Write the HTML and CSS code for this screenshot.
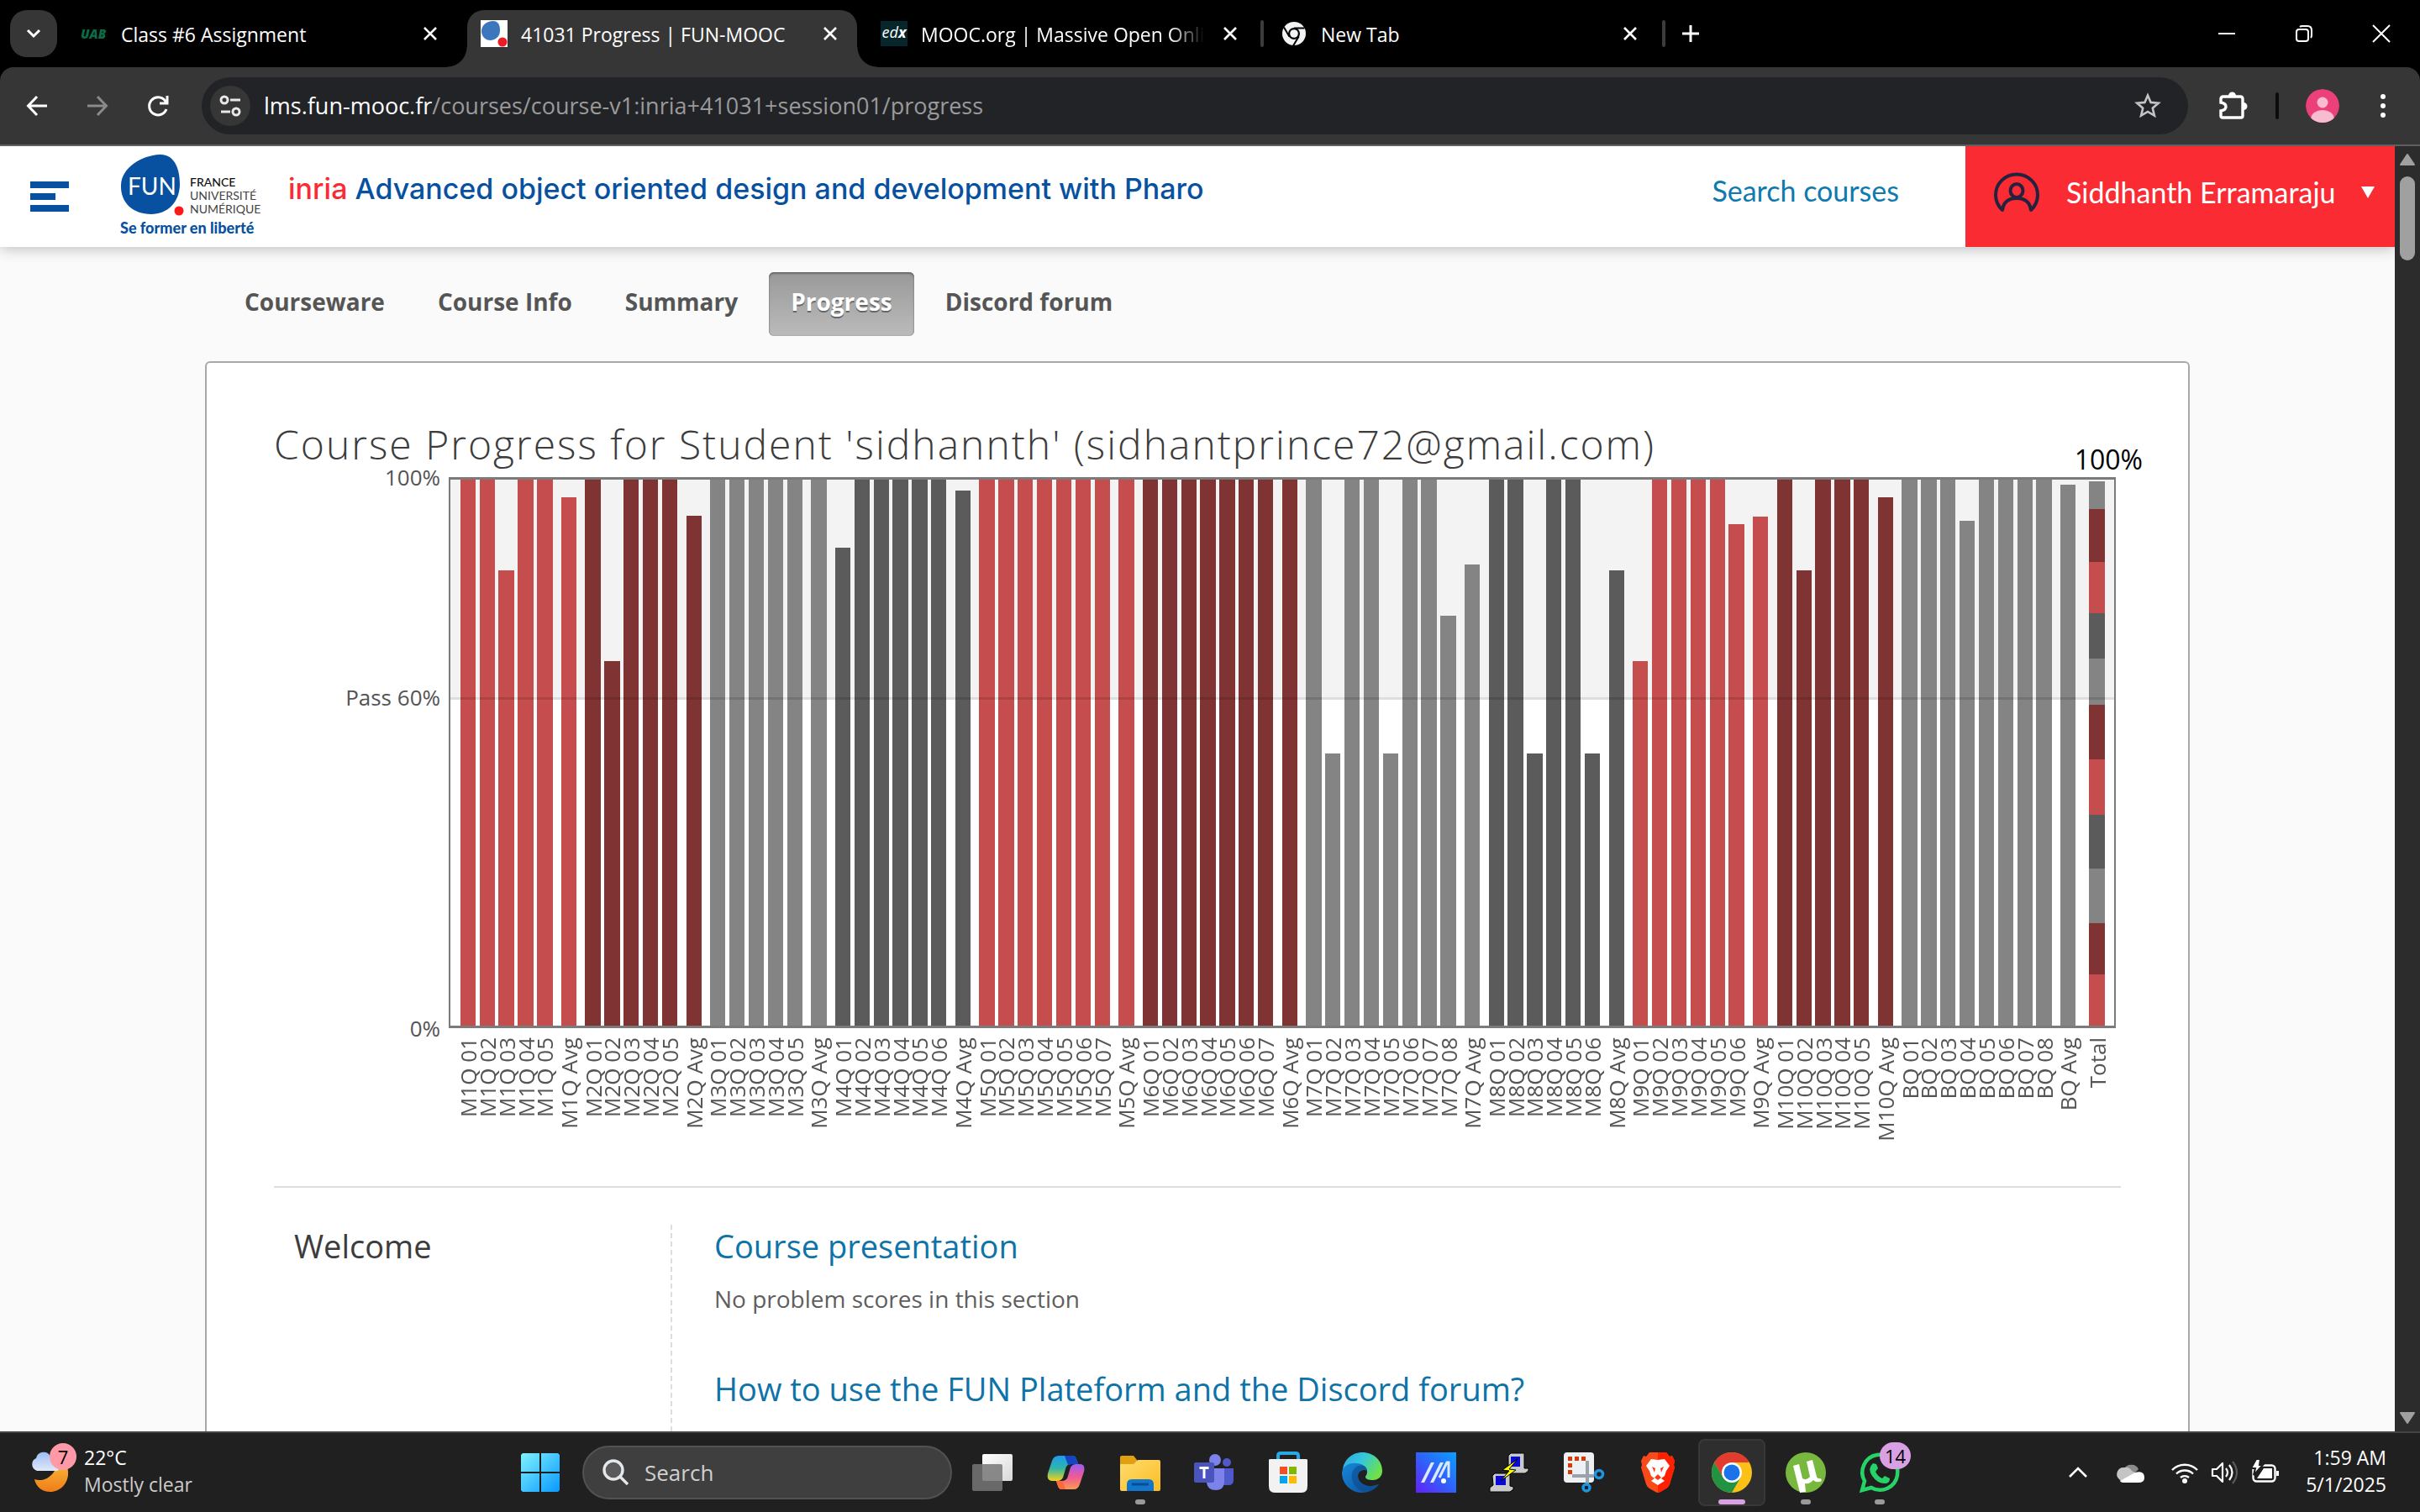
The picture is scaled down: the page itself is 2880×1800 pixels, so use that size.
FILE: index.html
```html
<!DOCTYPE html>
<html lang="en">
<head>
<meta charset="utf-8">
<title>41031 Progress | FUN-MOOC</title>
<link rel="stylesheet" href="styles.css">
</head>
<body>
<header class="browser">
  <div class="tabstrip">
    <button class="tab-search" aria-label="Search tabs"><svg width="20" height="12" viewBox="0 0 20 12"><path d="M3 2l7 7 7-7" fill="none" stroke="#fff" stroke-width="3"/></svg></button>
    <div class="tab">
      <span class="favicon uab">UAB</span>
      <span class="tab-title">Class #6 Assignment</span>
      <button class="icon-btn" aria-label="Close tab"><svg width="16" height="16" viewBox="0 0 16 16"><path d="M1 1l14 14M15 1L1 15" stroke="#fff" stroke-width="2.6"/></svg></button>
    </div>
    <div class="tab active">
      <span class="favicon"><svg width="32" height="32" viewBox="0 0 32 32"><rect width="32" height="32" fill="#fff"/><path d="M15 1C21 1 23 6 23 12c0 7-4 11-11 12C5 24 1 19 1 13 1 6 7 1 15 1z" fill="#3c76bd"/><circle cx="26" cy="26" r="5.5" fill="#ed1c24"/></svg></span>
      <span class="tab-title">41031 Progress | FUN-MOOC</span>
      <button class="icon-btn" aria-label="Close tab"><svg width="16" height="16" viewBox="0 0 16 16"><path d="M1 1l14 14M15 1L1 15" stroke="#fff" stroke-width="2.6"/></svg></button>
    </div>
    <div class="tab">
      <span class="favicon edx">ed<b>x</b></span>
      <span class="tab-title fade">MOOC.org | Massive Open Online Courses</span>
      <button class="icon-btn" aria-label="Close tab"><svg width="16" height="16" viewBox="0 0 16 16"><path d="M1 1l14 14M15 1L1 15" stroke="#fff" stroke-width="2.6"/></svg></button>
    </div>
    <div class="tab split">
      <span class="favicon"><svg width="32" height="32" viewBox="0 0 32 32"><circle cx="16" cy="16" r="14" fill="#f1f3f4"/><g stroke="#000" stroke-width="2" fill="none"><path d="M16 9.500h12.500M10.400 19.500L4 8.500M21.600 19.500L15 30.500"/></g><circle cx="16" cy="16" r="7" fill="#000"/><circle cx="16" cy="16" r="4.800" fill="#f1f3f4"/></svg></span>
      <span class="tab-title">New Tab</span>
      <button class="icon-btn" aria-label="Close tab"><svg width="16" height="16" viewBox="0 0 16 16"><path d="M1 1l14 14M15 1L1 15" stroke="#fff" stroke-width="2.6"/></svg></button>
    </div>
    <button class="new-tab" aria-label="New tab"><svg width="20" height="20" viewBox="0 0 20 20"><path d="M10 0v20M0 10h20" stroke="#fff" stroke-width="3"/></svg></button>
    <div class="window-controls">
      <button aria-label="Minimize"><svg width="20" height="20" viewBox="0 0 20 20"><path d="M0 10h20" stroke="#fff" stroke-width="2"/></svg></button>
      <button aria-label="Restore"><svg width="20" height="20" viewBox="0 0 20 20" fill="none" stroke="#fff" stroke-width="2"><rect x="1" y="5" width="14" height="14" rx="3"/><path d="M5 2q1-1 3-1h6q5 0 5 5v6q0 2-1 3"/></svg></button>
      <button aria-label="Close"><svg width="20" height="20" viewBox="0 0 20 20"><path d="M0 0l20 20M20 0L0 20" stroke="#fff" stroke-width="2"/></svg></button>
    </div>
  </div>
  <div class="toolbar">
    <div class="nav-buttons">
      <button aria-label="Back"><svg width="24" height="24" viewBox="0 0 24 24" fill="none" stroke="#fff" stroke-width="3"><path d="M24 12H2M12 1L1.500 12 12 23"/></svg></button>
      <button aria-label="Forward"><svg width="24" height="24" viewBox="0 0 24 24" fill="none" stroke="#8a8a8a" stroke-width="3"><path d="M0 12h22M12 1l10.500 11L12 23"/></svg></button>
      <button aria-label="Reload"><svg width="24" height="24" viewBox="0 0 24 24" fill="none" stroke="#fff" stroke-width="3"><path d="M22 16A10.500 10.500 0 1 1 20.500 6L22 8.500M23 0v9h-9"/></svg></button>
    </div>
    <div class="omnibox">
      <button class="site-info" aria-label="Site information"><svg width="26" height="26" viewBox="0 0 26 26" fill="none" stroke="#e8e8e8" stroke-width="3"><circle cx="6" cy="6" r="4"/><path d="M13 6h12M2 20h11"/><circle cx="20" cy="20" r="4"/></svg></button>
      <div class="url" role="textbox" aria-label="Address"><span class="host">lms.fun-mooc.fr</span>/courses/course-v1:inria+41031+session01/progress</div>
      <button class="star" aria-label="Bookmark this tab"><svg width="32" height="32" viewBox="0 0 32 32"><path d="M16 3.500l3.600 8.400 9.100.8-6.900 6 2.100 8.900-7.900-4.700-7.900 4.700 2.100-8.900-6.900-6 9.100-.8z" fill="none" stroke="#c4c4c4" stroke-width="2.600"/></svg></button>
    </div>
    <div class="toolbar-end">
      <button aria-label="Extensions"><svg width="36" height="36" viewBox="0 0 36 36"><path d="M3 10q0-3 3-3h20q3 0 3 3v20q0 2-2 2H5q-2 0-2-2v-6q6-1 6-5t-6-5z" fill="none" stroke="#fff" stroke-width="3.400"/><path d="M12 6a4.500 4.500 0 0 1 9 0zM30 14a4.500 4.500 0 0 1 0 9z" fill="#fff"/></svg></button>
      <span class="toolbar-rule"></span>
      <button aria-label="Profile"><svg width="40" height="40" viewBox="0 0 40 40"><clipPath id="av"><circle cx="20" cy="20" r="20"/></clipPath><g clip-path="url(#av)"><circle cx="20" cy="20" r="20" fill="#ec407a"/><circle cx="20" cy="16" r="6.500" fill="#f8bbd0"/><ellipse cx="20" cy="34" rx="13.500" ry="9" fill="#f8bbd0"/></g></svg></button>
      <button aria-label="Menu"><svg width="8" height="28" viewBox="0 0 8 28" fill="#fff"><circle cx="4" cy="3" r="3"/><circle cx="4" cy="14" r="3"/><circle cx="4" cy="25" r="3"/></svg></button>
    </div>
  </div>
</header>

<div class="viewport">
  <div class="page">
    <header class="site-header">
      <button class="burger" aria-label="Menu"><svg width="46" height="36" viewBox="0 0 46 36" fill="#0751a0"><path d="M0 0h46v8H0zM0 14h30v8H0zM0 28h46v8H0z"/></svg></button>
      <a class="logo" href="#">
        <span class="logo-top">
          <span class="logo-blob"><svg width="78" height="74" viewBox="0 0 78 74"><path d="M47 1C62 0 71 14 71 36 71 58 56 72 37 72 15 72 0 58 1 37 2 16 26 2 47 1z" fill="#0751a0"/><circle cx="70" cy="68" r="5.500" fill="#ff1818"/></svg><span class="logo-fun">FUN</span></span>
          <span class="logo-words"><b>FRANCE</b><br>UNIVERSITÉ<br>NUMÉRIQUE</span>
        </span>
        <span class="logo-tag">Se former en liberté</span>
      </a>
      <h2 class="course-name"><span class="org">inria</span> Advanced object oriented design and development with Pharo</h2>
      <a class="search-link" href="#">Search courses</a>
      <button class="user-menu">
        <svg width="54" height="50" viewBox="0 0 54 50" fill="none" stroke="#24223f" stroke-width="4"><path d="M10 46A25 24.500 0 1 1 44 46Q42 32 27 32T10 46z" stroke-linejoin="round"/><ellipse cx="27" cy="23" rx="7.500" ry="8"/></svg>
        <span>Siddhanth Erramaraju</span>
        <svg width="16" height="14" viewBox="0 0 16 14"><path d="M0 0h16L8 14z" fill="#fff"/></svg>
      </button>
    </header>
    <nav class="course-tabs">
      <a href="#">Courseware</a><a href="#">Course Info</a><a href="#">Summary</a><a href="#" class="current">Progress</a><a href="#">Discord forum</a>
    </nav>
    <main class="content">
      <h1>Course Progress for Student 'sidhannth' (sidhantprince72@gmail.com)</h1>
      <div class="chart">
        <div class="y-axis"><span>100%</span><span>Pass 60%</span><span>0%</span></div>
        <div class="plot" id="plot"></div>
        <span class="grade">100%</span>
        <div class="x-axis" id="x-axis"></div>
      </div>
      <section class="chapter">
        <h2>Welcome</h2>
        <div class="sections">
          <h3><a href="#">Course presentation</a></h3>
          <p>No problem scores in this section</p>
          <h3><a href="#">How to use the FUN Plateform and the Discord forum?</a></h3>
        </div>
      </section>
    </main>
  </div>
  <div class="scrollbar">
    <svg width="18" height="14" viewBox="0 0 18 14"><path d="M9 1l8 12H1z" fill="#a0a0a0" stroke="#a0a0a0" stroke-width="2" stroke-linejoin="round"/></svg>
    <span class="thumb"></span>
    <svg class="down" width="18" height="14" viewBox="0 0 18 14"><path d="M9 13L1 1h16z" fill="#a0a0a0" stroke="#a0a0a0" stroke-width="2" stroke-linejoin="round"/></svg>
  </div>
</div>

<footer class="taskbar">
  <button class="weather">
    <span class="weather-icon"><svg width="48" height="50" viewBox="0 0 48 50"><defs><linearGradient id="mo" x2="0" y2="1"><stop offset="0" stop-color="#f8c33c"/><stop offset="1" stop-color="#f07c18"/></linearGradient><linearGradient id="cl" x2="0" y2="1"><stop offset="0" stop-color="#9dbdf5"/><stop offset="1" stop-color="#dfe9fb"/></linearGradient></defs><path d="M34 8c8 4 12 11 11 20-1 11-10 20-21 20C14 48 7 42 5 33c11 4 26-3 29-25z" fill="url(#mo)"/><path d="M8 23a8 8 0 0 1-1-15 9 9 0 0 1 17-2 9 9 0 0 1 8 17z" fill="url(#cl)"/></svg><span class="badge pink">7</span></span>
    <span class="weather-text"><span>22°C</span><span class="dim">Mostly clear</span></span>
  </button>
  <div class="apps">
    <button class="start" aria-label="Start"><svg width="46" height="46" viewBox="0 0 46 46"><defs><linearGradient id="wn" x2="1" y2="1"><stop offset="0" stop-color="#7ff3ff"/><stop offset="1" stop-color="#0a98ff"/></linearGradient></defs><path d="M2 0h20v22H0V2zM24 0h20l2 2v20H24zM0 24h22v22H2l-2-2zM24 24h22v20l-2 2H24z" fill="url(#wn)"/></svg></button>
    <label class="search"><svg width="32" height="32" viewBox="0 0 32 32" fill="#5a5a5a" stroke="#e4e8ec" stroke-width="3.400"><circle cx="13" cy="13" r="11"/><path d="M21 21l9 9"/></svg><input type="text" placeholder="Search" aria-label="Search"></label>
    <div class="pinned">
      <button aria-label="Task view"><svg width="48" height="48" viewBox="0 0 48 48"><defs><linearGradient id="tv" x2="1" y2="1"><stop offset="0" stop-color="#fff"/><stop offset="1" stop-color="#d8d8d8"/></linearGradient></defs><rect x="12" y="2" width="36" height="32" rx="2" fill="url(#tv)"/><rect y="14" width="36" height="32" rx="2" fill="#777" opacity=".85"/></svg></button>
      <button aria-label="Copilot"><svg width="48" height="48" viewBox="0 0 48 48"><defs><linearGradient id="c1" x2="0" y2="1"><stop offset="0" stop-color="#1e9bf0"/><stop offset=".5" stop-color="#2fb5a8"/><stop offset="1" stop-color="#f5d21c"/></linearGradient><linearGradient id="c2" x2="0" y2="1"><stop offset="0" stop-color="#9a5cf5"/><stop offset=".5" stop-color="#ee5a96"/><stop offset="1" stop-color="#fb9a50"/></linearGradient></defs><path d="M15 4h16q4 0 5 4l2 6h-8q-6 0-7 6l-3 10q-2 4-7 4H8q-8 0-6-9L7 10q2-6 8-6z" fill="url(#c1)"/><path d="M22 4h9q4 0 5 4l2 6h-8l-4 1z" fill="#1345c4"/><path d="M33 44H19q-4 0-5-4l-2-6h6q7 0 8-6l3-10q2-4 7-4h4q7 0 5 9l-5 15q-2 6-7 6z" fill="url(#c2)"/><path d="M12 34h8l3 10h-5q-3 0-4-4z" fill="#ff6a3c"/></svg></button>
      <button class="running" aria-label="File Explorer"><svg width="48" height="48" viewBox="0 0 48 48"><defs><linearGradient id="fo" x2="1" y2="1"><stop offset="0" stop-color="#ffdc6e"/><stop offset="1" stop-color="#fcbc24"/></linearGradient></defs><path d="M0 6q0-2 2-2h14l4 5v8H0z" fill="#e0a010"/><path d="M0 14h16l5-5h25q2 0 2 2v33q0 2-2 2H2q-2 0-2-2z" fill="url(#fo)"/><path d="M8 46V38q0-6 6-6h20q6 0 6 6v8z" fill="#1277cc"/><path d="M14 38h20" stroke="#0a4c92" stroke-width="3"/></svg></button>
      <button aria-label="Microsoft Teams"><svg width="48" height="48" viewBox="0 0 48 48"><circle cx="25" cy="9" r="7" fill="#7b83eb"/><circle cx="39" cy="12" r="5" fill="#5059c9"/><path d="M34 19h13v14q0 6-6 6h-7z" fill="#5059c9"/><path d="M16 19h20v15q0 11-10 11T15 36z" fill="#7b83eb"/><rect y="12" width="24" height="24" rx="2" fill="#4b53bc"/><path d="M6.500 18.500h11M12 18.500V31" stroke="#fff" stroke-width="3"/></svg></button>
      <button aria-label="Microsoft Store"><svg width="48" height="48" viewBox="0 0 48 48"><path d="M12 9V4q0-3 3-3h18q3 0 3 3v5" fill="none" stroke="#28a8e4" stroke-width="4"/><path d="M1 9q0-1 2-1h42q2 0 2 1v31q0 8-7 8H8q-7 0-7-8z" fill="#f2f2f2"/><path d="M14 17h9v9h-9z" fill="#f25022"/><path d="M25 17h9v9h-9z" fill="#7fba00"/><path d="M14 28h9v9h-9z" fill="#00a4ef"/><path d="M25 28h9v9h-9z" fill="#ffb900"/></svg></button>
      <button aria-label="Microsoft Edge"><svg width="48" height="48" viewBox="0 0 48 48"><defs><linearGradient id="e1" x2="1" y2=".5"><stop offset="0" stop-color="#2ea5e8"/><stop offset=".5" stop-color="#33c8dc"/><stop offset="1" stop-color="#6de04c"/></linearGradient><linearGradient id="e2" x2="1" y2="1"><stop offset="0" stop-color="#1788d8"/><stop offset="1" stop-color="#0c4f9c"/></linearGradient></defs><path d="M1 21C2 9 12 0 24 0c14 0 24 10 24 22 0 7-5 11-11 11-5 0-9-1-9-4 0-1 2-2 2-6 0-5-5-9-12-9C9 14 2 18 1 21z" fill="url(#e1)"/><path d="M0 24C1 16 9 12 17 13c7 0 12 4 13 9-3-2-10-1-11 6 0 8 9 13 17 12 4-1 7-2 8-2C40 44 32 48 24 48 11 48 0 38 0 24z" fill="url(#e2)"/><path d="M12 25c2-8 9-11 14-9 3 1 4 4 4 6-3-2-10-1-11 6 0 8 9 13 17 12 4-1 7-2 8-2-4 6-10 9-17 9-9-1-17-11-15-22z" fill="#0e4a8a" opacity=".6"/></svg></button>
      <button aria-label="MyASUS"><svg width="48" height="48" viewBox="0 0 48 48"><defs><linearGradient id="ma" x1="1" x2="0" y2="1"><stop offset="0" stop-color="#0aa0ff"/><stop offset=".5" stop-color="#2f62fa"/><stop offset="1" stop-color="#6420f8"/></linearGradient></defs><path d="M0 0h48v48H0z" fill="url(#ma)"/><path d="M6 36h4l12-24h-4zM17 36h4l12-24h-4z" fill="#dce8ff"/><path d="M28 30l9-18h2v18" fill="none" stroke="#dce8ff" stroke-width="3"/><circle cx="33" cy="34" r="3" fill="#fff"/></svg></button>
      <button aria-label="PuTTY"><svg width="48" height="48" viewBox="0 0 48 48"><path d="M22 4l3-3h16v18l5 0v3l-4 3H22z" fill="#c9c9c9" stroke="#000"/><path d="M25 5h11v12H25z" fill="#0a0ad8"/><path d="M3 28l3-3h18v15l4 1v3l-4 3H0v-5l4-3z" fill="#c9c9c9" stroke="#000"/><path d="M7 28h12v11H7z" fill="#0a0ad8"/><path d="M33 8L15 21l8 1-10 12 18-13-8-1z" fill="#ff0" stroke="#000"/></svg></button>
      <button aria-label="Snipping Tool"><svg width="48" height="48" viewBox="0 0 48 48"><rect width="36" height="36" rx="4" fill="#eef1f4"/><path d="M7.500 26V7.500H29" fill="none" stroke="#d83b01" stroke-width="5" stroke-dasharray="5 3"/><path d="M10 28h26M28 10v28" stroke="#9aa3ad" stroke-width="4" fill="none"/><circle cx="42" cy="26" r="4.500" fill="none" stroke="#1c96e0" stroke-width="3.500"/><circle cx="27" cy="42" r="4" fill="none" stroke="#1c96e0" stroke-width="3.500"/></svg></button>
      <button aria-label="Brave"><svg width="48" height="48" viewBox="0 0 48 48"><path d="M14 0h20l4 5 3-1 3 6-1 5 1 3-6 20q-1 3-4 5l-7 4q-3 2-6 0l-7-4q-3-2-4-5L4 18l1-3-1-5 3-6 3 1z" fill="#fb4a1a"/><path d="M24 0h10l4 5 3-1 3 6-1 5 1 3-6 20q-1 3-4 5l-7 4-3 1z" fill="#ff2000"/><path d="M24 9l8-1 6 8-4 6-2 6-4 3 4 3-8 5-8-5 4-3-4-3-2-6-4-6 6-8z" fill="#fff"/><path d="M17 17l4 2-1 5zM31 17l-4 2 1 5zM24 26l4 4-4 3-4-3z" fill="#fb3a12"/></svg></button>
      <button class="running focused" aria-label="Google Chrome"><svg width="48" height="48" viewBox="0 0 48 48"><circle cx="24" cy="24" r="24" fill="#fbc116"/><path d="M24 12h20.800A24 24 0 0 0 3.200 12l10.400 18z" fill="#e33b2e"/><path d="M3.200 12A24 24 0 0 0 24 48l10.400-18-10 6-10.800-6z" fill="#229342"/><circle cx="24" cy="24" r="12" fill="#fff"/><circle cx="24" cy="24" r="9.500" fill="#1a73e8"/></svg></button>
      <button class="running" aria-label="uTorrent"><svg width="48" height="48" viewBox="0 0 48 48"><circle cx="24" cy="24" r="24" fill="#79b83f"/><path d="M9 16l7-2 4 17q5 3 9-2l-4-18 7-2 5 20q1 3 5 2l1 3q-6 3-10-1-4 5-10 4l1 10-7 1z" fill="#fff"/></svg></button>
      <button class="running" aria-label="WhatsApp"><svg width="48" height="48" viewBox="0 0 48 48"><path d="M3 45l3-11A21 21 0 1 1 14 42z" fill="none" stroke="#25d366" stroke-width="4.500"/><path d="M16 13l4 1 2 5-3 4q3 6 8 8l3-3 6 3q0 6-6 6-9 0-15-9-6-9 1-15z" fill="#25d366"/></svg><span class="badge lilac">14</span></button>
    </div>
  </div>
  <div class="tray">
    <button aria-label="Show hidden icons"><svg width="22" height="14" viewBox="0 0 22 14"><path d="M1 12L11 2l10 10" fill="none" stroke="#fff" stroke-width="2.600"/></svg></button>
    <button aria-label="OneDrive"><svg width="32" height="24" viewBox="0 0 32 24"><path d="M8 8a9 8 0 0 1 17 0l-8 8z" fill="#8c8c8c"/><path d="M2 20a8 8 0 0 1 6-14q6-1 9 4l5 3-18 9z" fill="#c4c4c4"/><path d="M3 22l18-10q11-3 11 6 0 6-7 6H8q-4 0-5-2z" fill="#fff"/></svg></button>
    <button class="status" aria-label="Network, sound, battery">
      <svg width="32" height="26" viewBox="0 0 32 26" fill="none" stroke="#fff" stroke-width="2.400"><path d="M1 10a21 21 0 0 1 30 0M6 14.500a14.500 14.500 0 0 1 20 0M11 19a7.500 7.500 0 0 1 10 0"/><circle cx="16" cy="23" r="3" fill="#fff" stroke="none"/></svg>
      <svg width="32" height="28" viewBox="0 0 32 28" fill="none" stroke="#fff" stroke-width="2.200"><path d="M1 10h5l7-7v22l-7-7H1z" stroke-linejoin="round"/><path d="M17 9q4 5 0 10M21 5q7 9 0 18"/><path d="M25 1q10 13 0 26" stroke="#5a5a5a"/></svg>
      <svg width="32" height="28" viewBox="0 0 32 28"><rect x="1.500" y="5.500" width="26" height="19" rx="4" fill="none" stroke="#fff" stroke-width="2.400"/><path d="M6 21l8-12h10v12zM29 12h3v6h-3z" fill="#fff"/><path d="M5-2h5L9 5h4L2 17l2-8H-1z" fill="#fff" stroke="#202020" stroke-width="2"/></svg>
    </button>
    <button class="clock"><span>1:59 AM</span><span>5/1/2025</span></button>
  </div>
</footer>
<script src="chart.js"></script>
</body>
</html>
```
FILE: styles.css
```css
* { box-sizing: border-box; }
body {
  margin: 0;
  height: 100vh;
  display: flex;
  flex-direction: column;
  overflow: hidden;
  font-family: "Open Sans", "Noto Sans", sans-serif;
  background: #000;
}
button { border: 0; padding: 0; background: none; font: inherit; color: inherit; display: flex; align-items: center; justify-content: center; }
a { text-decoration: none; color: inherit; }
h1, h2, h3, p { margin: 0; font-weight: 400; }
svg { display: block; flex: none; overflow: visible; }

/* Browser window */
.browser { color: #fff; flex: none; }
.tabstrip { display: flex; height: 80px; padding: 12px 12px 0; background: #000; }
.tab-search { width: 56px; height: 56px; border-radius: 20px; background: #363636; margin-right: 12px; }
.tab { display: flex; align-items: center; width: 476px; height: 56px; padding: 0 36px 0 16px; gap: 16px; position: relative; }
.favicon { width: 32px; height: 32px; flex: none; }
.uab { font-size: 15px; line-height: 32px; font-weight: 800; font-style: italic; color: #0b6b46; }
.edx { font-size: 18px; line-height: 26px; font-style: italic; text-align: center; background: #06262c; height: 30px; }
.tab-title { flex: 1; font-size: 23px; line-height: 32px; padding-top: 2px; white-space: nowrap; overflow: hidden; }
.tab-title.fade { -webkit-mask-image: linear-gradient(90deg, #000 86%, transparent 98%); mask-image: linear-gradient(90deg, #000 86%, transparent 98%); }
.tab.active { height: 68px; padding-bottom: 12px; width: 464px; padding-right: 24px; margin-right: 12px; background: #363636; border-radius: 20px 20px 0 0; }
.tab.active::before, .tab.active::after { content: ""; position: absolute; bottom: 0; width: 24px; height: 24px; }
.tab.active::before { right: 100%; background: radial-gradient(circle at 0 0, transparent 23px, #363636 24px); }
.tab.active::after { left: 100%; background: radial-gradient(circle at 100% 0, transparent 23px, #363636 24px); }
.tab.split::before, .tab.split::after { content: ""; position: absolute; top: 12px; width: 4px; height: 32px; border-radius: 2px; background: #3c3c3c; }
.tab.split::before { left: -8px; }
.tab.split::after { right: 2px; }
.new-tab { width: 56px; height: 56px; margin-left: -4px; margin-right: auto; padding-left: 8px; }
.window-controls { display: flex; margin-right: -12px; }
.window-controls button { width: 92px; height: 56px; }

.toolbar { display: flex; align-items: center; height: 94px; padding: 0 40px 0 32px; background: #363636; border-bottom: 2px solid #5f5f5f; border-radius: 16px 16px 0 0; }
.nav-buttons { display: flex; gap: 48px; margin-right: 40px; }
.omnibox { flex: 1; display: flex; align-items: center; height: 68px; border-radius: 34px; padding: 0 32px 0 10px; background: #222327; }
.site-info { width: 48px; height: 48px; border-radius: 50%; background: #363636; margin-right: 16px; }
.url { flex: 1; font-size: 27px; line-height: 40px; color: #9a9a9a; }
.host { color: #fff; }
.toolbar-end { display: flex; align-items: center; gap: 32px; margin-left: 36px; }
.toolbar-end button:last-child { margin-left: 16px; }
.toolbar-rule { width: 4px; height: 32px; border-radius: 2px; background: #0c0c0c; }

/* Page */
.viewport { flex: 1; min-height: 0; display: flex; }
.page { flex: 1; min-width: 0; overflow: hidden; background: #fafafa; display: flex; flex-direction: column; }
.scrollbar { width: 30px; background: #2c2c2c; display: flex; flex-direction: column; align-items: center; padding: 9px 0; }
.thumb { width: 18px; height: 100px; border-radius: 9px; background: #a0a0a0; margin-top: 13px; }
.scrollbar .down { margin-top: auto; }

.site-header { flex: none; display: flex; align-items: stretch; height: 120px; background: #fff; box-shadow: 0 2px 16px rgba(0, 0, 0, .25); padding-left: 36px; font-family: Lato, "Open Sans", sans-serif; position: relative; }
.burger { margin-right: 61px; }
.logo { display: flex; flex-direction: column; width: 164px; padding-top: 9px; color: #0751a0; white-space: nowrap; }
.logo-top { display: flex; height: 74px; gap: 5px; }
.logo-blob { position: relative; }
.logo-fun { position: absolute; left: 9px; top: 20px; color: #fff; font-size: 28px; line-height: 36px; }
.logo-words { color: #444; font-size: 14px; line-height: 16px; padding-top: 26px; }
.logo-words b { color: #111; font-weight: 500; }
.logo-tag { font-size: 18px; line-height: 20px; font-weight: 900; margin-top: 4px; }
.course-name { flex: 1; margin-left: 36px; padding-top: 28px; font-family: Inter, "Open Sans", sans-serif; font-size: 34px; line-height: 46px; font-weight: 500; color: #0751a0; white-space: nowrap; }
.org { color: #fa2b33; }
.search-link { margin-right: 79px; font-size: 34px; line-height: 46px; padding-top: 30px; color: #0e7ab0; }
.user-menu { width: 511px; background: #fa2b33; color: #fff; font-size: 34px; line-height: 46px; justify-content: flex-start; padding: 0 24px 10px 34px; }
.user-menu span { margin: 0 auto 0 32px; }

.course-tabs { flex: none; display: flex; gap: 11px; padding: 30px 265px; font-size: 28px; line-height: 38px; font-weight: 700; color: #555; }
.course-tabs a { padding: 16px 26px 22px; border-radius: 6px; }
.course-tabs .current { color: #fff; background: linear-gradient(#999, #bbb); box-shadow: inset 0 2px 2px #6a6a6a, inset 0 0 2px #888; text-shadow: 0 2px 0 #666; }

.content { flex: 1 0 auto; margin: 0 244px; border: 2px solid #a8a8a8; border-bottom: 0; border-radius: 6px 6px 0 0; background: #fff; padding: 64px 80px 0; display: flex; flex-direction: column; }
h1 { font-size: 48px; line-height: 66px; font-weight: 300; letter-spacing: 2px; color: #3c3c3c; white-space: nowrap; }
.chart { position: relative; display: grid; grid-template-columns: 198px minmax(0, 1fr); column-gap: 10px; margin-top: 6px; padding: 0 6px 52px 0; border-bottom: 2px solid #ddd; color: #545454; font-size: 26px; }
.y-axis { display: grid; grid-template-rows: 2fr 3fr 0; text-align: right; line-height: 36px; }
.y-axis span { height: 36px; margin-top: -18px; }
.plot { position: relative; display: flex; align-items: stretch; height: 656px; padding: 2px 0 1px; background: linear-gradient(#f3f3f3 40%, #fff 40%); }
.plot::after { content: ""; position: absolute; inset: 0; border: solid #7b7b7b; border-width: 3px 2px; background: linear-gradient(rgba(0, 0, 0, .13), rgba(0, 0, 0, .13)) 0 40% / 100% 3px no-repeat; }
.col { flex: 1 1 0; display: flex; flex-direction: column; justify-content: flex-end; align-items: center; min-width: 0; }
.col.wide { flex-grow: 1.5; }
.lead { flex: .5 1 0; }
.trail { flex: .25 1 0; }
.bar { width: 80%; flex: none; }
.wide .bar { width: 53.4%; }
.red { background: #c54d4d; }
.maroon { background: #7f3333; }
.gray { background: #848484; }
.dark { background: #5b5b5b; }
.grade { position: absolute; right: -26px; top: -43px; font-size: 32px; line-height: 44px; color: #000; }
.x-axis { grid-column: 2; display: flex; height: 136px; padding-top: 11px; }
.x-axis .col { justify-content: flex-start; }
.x-axis span { writing-mode: vertical-rl; transform: rotate(180deg); line-height: 28px; white-space: nowrap; flex: none; }

.chapter { flex: 1; display: flex; padding-top: 44px; }
.chapter h2 { width: 472px; padding-left: 24px; font-size: 38px; line-height: 50px; color: #3c3c3c; }
.sections { flex: 1; padding-left: 50px; border-left: 2px dashed #ddd; }
h3 { font-size: 38px; line-height: 50px; color: #0e73a8; }
.sections p { font-size: 28px; line-height: 40px; color: #5e5e5e; padding: 18px 0 62px; }

/* Taskbar */
.taskbar { flex: none; height: 96px; border-top: 2px solid #444; background: #202020; color: #fff; display: grid; grid-template-columns: 620px 1fr auto; font-size: 23px; line-height: 32px; }
.weather { justify-content: flex-start; padding-left: 36px; gap: 16px; }
.weather-icon { position: relative; }
.weather-text { display: flex; flex-direction: column; text-align: left; padding-bottom: 4px; }
.dim { color: #ccc; }
.badge { position: absolute; height: 32px; min-width: 32px; border-radius: 16px; color: #000; font-size: 22px; line-height: 32px; text-align: center; }
.pink { background: #ff99a8; left: 23px; top: -10px; }
.lilac { background: #d9a0e4; left: 40px; top: 4px; padding: 0 6px; }
.apps { display: flex; align-items: center; }
.start { margin-right: 27px; }
.search { display: flex; align-items: center; width: 440px; height: 64px; border-radius: 32px; background: #3f3f3f; border: 2px solid #525252; padding: 0 22px; gap: 18px; }
.search input { flex: 1; min-width: 0; border: 0; background: none; font: inherit; font-size: 26px; color: #ddd; outline: 0; padding: 0; }
.search input::placeholder { color: #d0d0d0; opacity: 1; }
.pinned { display: flex; gap: 8px; margin-left: 8px; }
.pinned button { width: 80px; height: 80px; border-radius: 8px; position: relative; }
.focused { background: #2e2e2e; box-shadow: inset 0 0 0 2px #383838; }
.running::after { content: ""; position: absolute; bottom: 2px; left: 34px; width: 12px; height: 6px; border-radius: 3px; background: #9a9a9a; }
.running.focused::after { left: 24px; width: 32px; background: #d9a0e4; }
.tray { display: flex; align-items: center; padding-right: 40px; }
.tray button + button { margin-left: 36px; }
.tray .status { gap: 16px; margin-left: 32px; }
.tray .clock { display: flex; flex-direction: column; align-items: flex-end; margin-left: 32px; padding-bottom: 4px; }
```
FILE: chart.js
```js
// Score of every quiz in each module, then the module average.
const modules = [
  ["M1Q", "red", [100, 100, 83.3, 100, 100], 96.7],
  ["M2Q", "maroon", [100, 66.7, 100, 100, 100], 93.3],
  ["M3Q", "gray", [100, 100, 100, 100, 100], 100],
  ["M4Q", "dark", [87.5, 100, 100, 100, 100, 100], 97.9],
  ["M5Q", "red", [100, 100, 100, 100, 100, 100, 100], 100],
  ["M6Q", "maroon", [100, 100, 100, 100, 100, 100, 100], 100],
  ["M7Q", "gray", [100, 50, 100, 100, 50, 100, 100, 75], 84.4],
  ["M8Q", "dark", [100, 100, 50, 100, 100, 50], 83.3],
  ["M9Q", "red", [66.7, 100, 100, 100, 100, 91.7], 93.1],
  ["M10Q", "maroon", [100, 83.3, 100, 100, 100], 96.7],
  ["BQ", "gray", [100, 100, 100, 92.3, 100, 100, 100, 100], 99]
];

const plot = document.getElementById("plot");
const axis = document.getElementById("x-axis");

function add(parent, className, text) {
  const el = document.createElement(text ? "span" : "div");
  if (className) el.className = className;
  if (text) el.textContent = text;
  parent.appendChild(el);
  return el;
}

function column(label, bars, wide) {
  const name = wide ? "col wide" : "col";
  const col = add(plot, name);
  for (const [color, value] of bars) add(col, "bar " + color).style.height = value + "%";
  add(add(axis, name), "", label);
}

add(plot, "lead");
add(axis, "lead");
for (const [name, color, scores, average] of modules) {
  scores.forEach((score, i) => column(name + " 0" + (i + 1), [[color, score]], false));
  column(name + " Avg", [[color, average]], true);
}
// The last module counts for 5% of the grade, the others for 10%.
const shares = modules.map(([name, color, , average]) => [color, average * (name === "BQ" ? 0.05 : 0.1)]);
column("Total", shares.reverse(), true);
add(plot, "trail");
add(axis, "trail");
```
